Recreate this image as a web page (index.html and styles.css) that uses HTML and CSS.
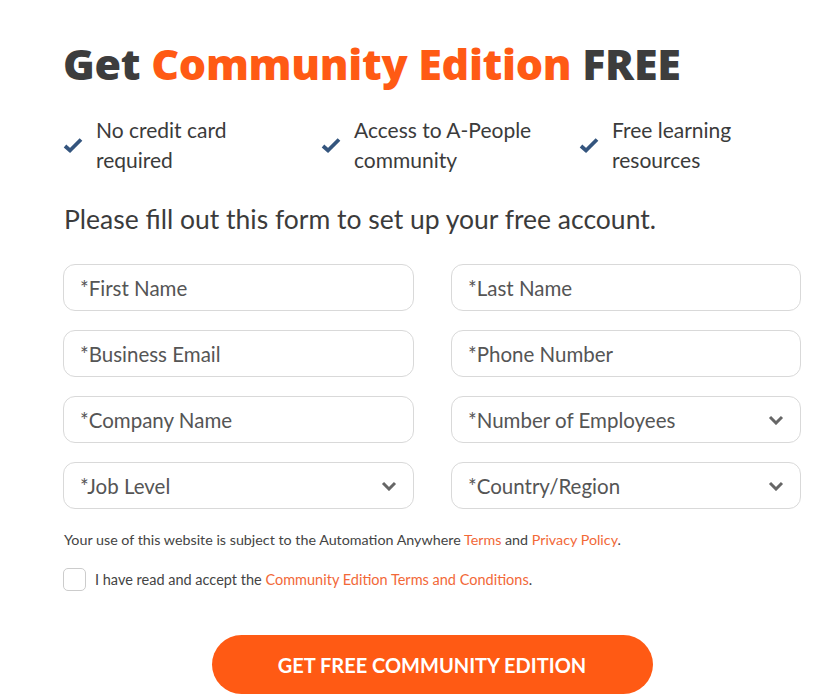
FILE: index.html
```html
<!DOCTYPE html>
<html lang="en">
<head>
  <meta charset="UTF-8">
  <meta name="viewport" content="width=device-width, initial-scale=1.0">
  <title>Get Community Edition FREE</title>
  <link rel="stylesheet" href="styles.css">
</head>
<body>
  <div class="container">
    <h1>Get <span class="accent">Community Edition</span> FREE</h1>

    <ul class="perks">
      <li>
        <svg class="check" viewBox="0 0 20 16"><path d="M2 8.5 L7 13 L18 2" /></svg>
        <span>No credit card<br>required</span>
      </li>
      <li>
        <svg class="check" viewBox="0 0 20 16"><path d="M2 8.5 L7 13 L18 2" /></svg>
        <span>Access to A-People<br>community</span>
      </li>
      <li>
        <svg class="check" viewBox="0 0 20 16"><path d="M2 8.5 L7 13 L18 2" /></svg>
        <span>Free learning<br>resources</span>
      </li>
    </ul>

    <p class="lead">Please fill out this form to set up your free account.</p>

    <form class="signup">
      <div class="grid">
        <input type="text" placeholder="*First Name">
        <input type="text" placeholder="*Last Name">
        <input type="email" placeholder="*Business Email">
        <input type="tel" placeholder="*Phone Number">
        <input type="text" placeholder="*Company Name">
        <div class="select">
          <span>*Number of Employees</span>
          <svg class="chevron" viewBox="0 0 16 10"><path d="M2 2 L8 8 L14 2" /></svg>
        </div>
        <div class="select">
          <span>*Job Level</span>
          <svg class="chevron" viewBox="0 0 16 10"><path d="M2 2 L8 8 L14 2" /></svg>
        </div>
        <div class="select">
          <span>*Country/Region</span>
          <svg class="chevron" viewBox="0 0 16 10"><path d="M2 2 L8 8 L14 2" /></svg>
        </div>
      </div>

      <p class="terms">Your use of this website is subject to the Automation Anywhere <a href="#">Terms</a> and <a href="#">Privacy Policy</a>.</p>

      <label class="agree">
        <span class="box"></span>
        <span>I have read and accept the <a href="#">Community Edition Terms and Conditions</a>.</span>
      </label>

      <div class="actions">
        <button type="button">GET FREE COMMUNITY EDITION</button>
      </div>
    </form>
  </div>
</body>
</html>
```

FILE: styles.css
```css
body {
  margin: 0;
  background: #fff;
  font-family: 'Lato', 'Open Sans', sans-serif;
  color: #3b3b3b;
}

.container {
  width: 738px;
  padding: 36px 0 0 63px;
}

h1 {
  margin: 0;
  font-family: 'Open Sans', sans-serif;
  font-weight: 800;
  font-size: 43px;
  line-height: 56px;
  letter-spacing: -0.3px;
  color: #3d3d3d;
}

.accent {
  color: #ff5a14;
}

.perks {
  list-style: none;
  margin: 23px 0 0;
  padding: 0;
  display: flex;
}

.perks li {
  flex: 0 0 258px;
  display: flex;
  align-items: center;
  font-size: 21px;
  line-height: 30px;
  color: #3b3b3b;
}

.check {
  width: 20px;
  height: 17px;
  margin: 0 13px 0 0;
  flex-shrink: 0;
}

.check path {
  fill: none;
  stroke: #34557e;
  stroke-width: 3.8;
}

.lead {
  margin: 27px 0 0 1px;
  font-size: 26.5px;
  line-height: 34px;
  color: #3b3b3b;
}

.signup {
  margin-top: 28px;
}

.grid {
  display: grid;
  grid-template-columns: 351px 350px;
  column-gap: 37px;
  row-gap: 19px;
}

.grid input,
.select {
  box-sizing: border-box;
  height: 47px;
  border: 1px solid #d9d9d9;
  border-radius: 12px;
  padding: 0 16px;
  font-family: 'Lato', 'Open Sans', sans-serif;
  font-size: 20.5px;
  color: #555;
  background: #fff;
  outline: none;
}

.grid input::placeholder {
  color: #555;
}

.select {
  display: flex;
  align-items: center;
  justify-content: space-between;
}

.chevron {
  width: 16px;
  height: 10px;
}

.chevron path {
  fill: none;
  stroke: #666;
  stroke-width: 3;
}

.terms {
  margin: 22px 0 0 1px;
  font-size: 14.3px;
  line-height: 18px;
  color: #444;
}

a {
  color: #f26838;
  text-decoration: none;
}

.agree {
  display: flex;
  align-items: center;
  margin-top: 19px;
  font-size: 14.5px;
  color: #444;
}

.box {
  box-sizing: border-box;
  width: 23px;
  height: 23px;
  border: 1px solid #ccc;
  border-radius: 5px;
  margin: 0 9px 0 0;
}

.actions {
  display: flex;
  justify-content: center;
  margin-top: 44px;
}

.actions button {
  width: 441px;
  height: 59px;
  border: none;
  border-radius: 30px;
  background: #ff5a14;
  color: #fff;
  font-family: 'Lato', 'Open Sans', sans-serif;
  font-weight: 700;
  font-size: 20px;
  cursor: pointer;
}
```
